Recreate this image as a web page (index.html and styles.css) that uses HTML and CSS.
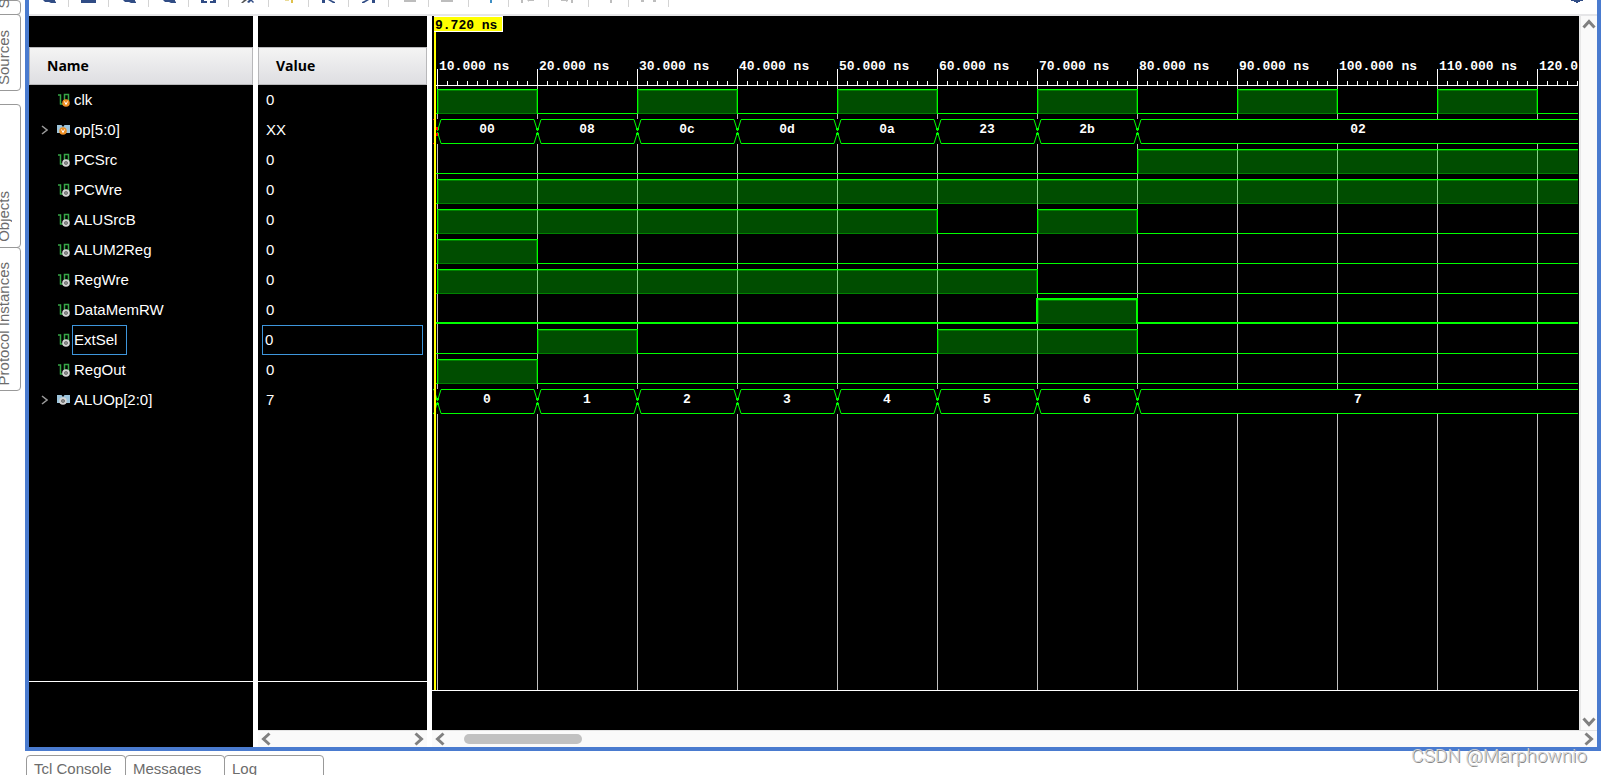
FILE: index.html
```html
<!DOCTYPE html>
<html lang="en">
<head>
<meta charset="utf-8">
<title>Waveform</title>
<link rel="stylesheet" href="styles.css">
</head>
<body>
<svg class="defs" aria-hidden="true">
  <defs>
    <symbol id="wire" viewBox="0 0 12 14">
      <path d="M0 2h2.500v9.500M6.500 11.500V1.500h4V8M2 11h5" fill="none" stroke="#35a545" stroke-width="1.500"/>
    </symbol>
    <symbol id="bus" viewBox="0 0 14 12">
      <path d="M1 1h4.500L7 3l1.500-2H14v8H1z" fill="#9cc4dc"/>
    </symbol>
    <symbol id="dot" viewBox="0 0 8 8">
      <circle cx="4" cy="4" r="3.800" fill="#d4d4d4"/><circle cx="4" cy="4" r="1.800" fill="#444"/><circle cx="4" cy="4" r=".8" fill="#ddd"/>
    </symbol>
    <symbol id="vdot" viewBox="0 0 8 8">
      <circle cx="4" cy="4" r="3.800" fill="#ee8f25"/><path d="M2.500 2.500 4 5.500 5.500 2.500" fill="none" stroke="#fff" stroke-width="1"/>
    </symbol>
    <symbol id="lens" viewBox="0 0 39 7"><path d="M14 0h12v1l1 1v1h-5l-2-1h-4z" fill="#304c85"/></symbol>
    <symbol id="chev" viewBox="0 0 14 14"><path d="M10.500 1.500 4.500 7l6 5.500" fill="none" stroke="#808080" stroke-width="3"/></symbol>
    <symbol id="cross" viewBox="0 0 8 24" overflow="visible">
      <path d="M0 .5h1L4.500 12 8 .5h1M0 24.500h1L4.500 13 8 24.500h1" fill="none" stroke="#0f0"/>
      <path d="M3 9h3v2H3zM3 14h3v2H3z" fill="#0f0"/>
    </symbol>
    <pattern id="minor" x="5" y="0" width="10" height="70" patternUnits="userSpaceOnUse"><path d="M0 65h1v4H0z" fill="#fff"/></pattern>
    <pattern id="major" x="5" y="0" width="100" height="70" patternUnits="userSpaceOnUse"><path d="M0 53h1v16H0zM50 64h1v5h-1z" fill="#fff"/></pattern>
  </defs>
</svg>

<div class="app">
  <nav class="rail" aria-label="Side panels">
    <button class="side-tab scope"><span>Scope</span></button>
    <button class="side-tab sources"><span>Sources</span></button>
    <button class="side-tab objects"><span>Objects</span></button>
    <button class="side-tab protocol"><span>Protocol Instances</span></button>
  </nav>

  <div class="workspace">
    <main class="frame">
      <div class="toolbar">
        <button class="tool" aria-label="Search"><svg viewBox="0 0 39 7"><use href="#lens"/></svg></button>
        <button class="tool" aria-label="Save"><svg viewBox="0 0 39 7"><path d="M12 0h15v3H12z" fill="#304c85"/></svg></button>
        <button class="tool" aria-label="Zoom in"><svg viewBox="0 0 39 7"><use href="#lens"/></svg></button>
        <button class="tool" aria-label="Zoom out"><svg viewBox="0 0 39 7"><use href="#lens"/></svg></button>
        <button class="tool" aria-label="Zoom fit"><svg viewBox="0 0 39 7"><path d="M12 0h3v1h3v2h-6zM27 0h-3v1h-3v2h6z" fill="#304c85"/></svg></button>
        <button class="tool" aria-label="Zoom to cursor"><svg viewBox="0 0 39 7"><path d="M15 0h3l-4 3h-2z" fill="#555"/><path d="M18 2l2-2h3l2 2-1 1-2-2-2 2z" fill="#304c85"/></svg></button>
        <button class="tool" aria-label="Go to marker"><svg viewBox="0 0 39 7"><path d="M16 0h4v1h-4z" fill="#eadb98"/><path d="M22 0h2v3h-2z" fill="#dfc14a"/></svg></button>
        <button class="tool" aria-label="Go to start"><svg viewBox="0 0 39 7"><path d="M13 0h3v3h-3zM19 0h3l4 2v1h-2z" fill="#304c85"/></svg></button>
        <button class="tool" aria-label="Go to end"><svg viewBox="0 0 39 7"><path d="M23 0h3v3h-3zM20 0h-3l-4 2v1h2z" fill="#304c85"/></svg></button>
        <button class="tool" aria-label="Previous transition"><svg viewBox="0 0 39 7"><path d="M15 0h12v2H15z" fill="#bdbdbd"/></svg></button>
        <button class="tool" aria-label="Next transition"><svg viewBox="0 0 39 7"><path d="M12 0h12v2H12z" fill="#bdbdbd"/></svg></button>
        <button class="tool" aria-label="Add marker"><svg viewBox="0 0 39 7"><path d="M21 0h2v3h-2z" fill="#3f8fc4"/></svg></button>
        <button class="tool" aria-label="Previous marker"><svg viewBox="0 0 39 7"><path d="M12 0h2v3h-2zM18 0h7v1h-5v1z" fill="#bdbdbd"/></svg></button>
        <button class="tool" aria-label="Next marker"><svg viewBox="0 0 39 7"><path d="M22 0h2v3h-2zM12 0h7v1l-2 1V1h-5z" fill="#bdbdbd"/></svg></button>
        <button class="tool" aria-label="Swap cursors"><svg viewBox="0 0 39 7"><path d="M21 0h2v3h-2z" fill="#bdbdbd"/></svg></button>
        <button class="tool" aria-label="Float ruler"><svg viewBox="0 0 39 7"><path d="M12 0h3v2h-3zM24 0h3v2h-3z" fill="#bdbdbd"/></svg></button>
        <button class="gear" aria-label="Settings"><svg viewBox="0 0 39 7"><path d="M14 0h12v1h-3v1h-2v1h-2V2h-2V1h-3z" fill="#304c85"/></svg></button>
      </div>

      <div class="panes">
        <section class="pane names">
          <table>
            <thead><tr><th>Name</th></tr></thead>
            <tbody>
              <tr><td><div class="sig"><svg class="icon"><use href="#wire" width="12" height="14"/><use href="#vdot" x="4" y="6" width="8" height="8"/></svg><span class="label">clk</span></div></td></tr>
              <tr><td><div class="sig"><button class="expand" aria-label="Expand op"><svg viewBox="0 0 7 10"><path d="M1 1l5 4-5 4" fill="none" stroke="#9a9a9a" stroke-width="1.500"/></svg></button><svg class="icon"><use href="#bus" x="-2" y="1" width="14" height="12"/><use href="#vdot" x="1" y="4" width="8" height="8"/></svg><span class="label">op[5:0]</span></div></td></tr>
              <tr><td><div class="sig"><svg class="icon"><use href="#wire" width="12" height="14"/><use href="#dot" x="4" y="6" width="8" height="8"/></svg><span class="label">PCSrc</span></div></td></tr>
              <tr><td><div class="sig"><svg class="icon"><use href="#wire" width="12" height="14"/><use href="#dot" x="4" y="6" width="8" height="8"/></svg><span class="label">PCWre</span></div></td></tr>
              <tr><td><div class="sig"><svg class="icon"><use href="#wire" width="12" height="14"/><use href="#dot" x="4" y="6" width="8" height="8"/></svg><span class="label">ALUSrcB</span></div></td></tr>
              <tr><td><div class="sig"><svg class="icon"><use href="#wire" width="12" height="14"/><use href="#dot" x="4" y="6" width="8" height="8"/></svg><span class="label">ALUM2Reg</span></div></td></tr>
              <tr><td><div class="sig"><svg class="icon"><use href="#wire" width="12" height="14"/><use href="#dot" x="4" y="6" width="8" height="8"/></svg><span class="label">RegWre</span></div></td></tr>
              <tr><td><div class="sig"><svg class="icon"><use href="#wire" width="12" height="14"/><use href="#dot" x="4" y="6" width="8" height="8"/></svg><span class="label">DataMemRW</span></div></td></tr>
              <tr><td><div class="sig"><svg class="icon"><use href="#wire" width="12" height="14"/><use href="#dot" x="4" y="6" width="8" height="8"/></svg><span class="label selected">ExtSel</span></div></td></tr>
              <tr><td><div class="sig"><svg class="icon"><use href="#wire" width="12" height="14"/><use href="#dot" x="4" y="6" width="8" height="8"/></svg><span class="label">RegOut</span></div></td></tr>
              <tr><td><div class="sig"><button class="expand" aria-label="Expand ALUOp"><svg viewBox="0 0 7 10"><path d="M1 1l5 4-5 4" fill="none" stroke="#9a9a9a" stroke-width="1.500"/></svg></button><svg class="icon"><use href="#bus" x="-2" y="1" width="14" height="12"/><use href="#dot" x="1" y="4" width="8" height="8"/></svg><span class="label">ALUOp[2:0]</span></div></td></tr>
            </tbody>
          </table>
          <div class="foot tall"></div>
        </section>

        <section class="pane values">
          <table>
            <thead><tr><th>Value</th></tr></thead>
            <tbody>
              <tr><td><div class="val">0</div></td></tr>
              <tr><td><div class="val">XX</div></td></tr>
              <tr><td><div class="val">0</div></td></tr>
              <tr><td><div class="val">0</div></td></tr>
              <tr><td><div class="val">0</div></td></tr>
              <tr><td><div class="val">0</div></td></tr>
              <tr><td><div class="val">0</div></td></tr>
              <tr><td><div class="val">0</div></td></tr>
              <tr><td><div class="val selected">0</div></td></tr>
              <tr><td><div class="val">0</div></td></tr>
              <tr><td><div class="val">7</div></td></tr>
            </tbody>
          </table>
          <div class="foot"></div>
          <div class="hscroll">
            <button aria-label="Scroll left"><svg viewBox="0 0 14 14"><use href="#chev"/></svg></button>
            <button class="flip" aria-label="Scroll right"><svg viewBox="0 0 14 14"><use href="#chev"/></svg></button>
          </div>
        </section>

        <section class="wave">
          <div class="wave-body">
            <div class="canvas">
              <div class="plot">
                <svg class="ruler">
                  <rect x="4" width="100%" height="70" fill="url(#minor)"/>
                  <rect x="4" width="100%" height="70" fill="url(#major)"/>
                  <rect x="4" y="69" width="100%" height="1" fill="#fff"/>
                  <g class="mono">
                    <text x="7" y="54">10.000 ns</text><text x="107" y="54">20.000 ns</text><text x="207" y="54">30.000 ns</text>
                    <text x="307" y="54">40.000 ns</text><text x="407" y="54">50.000 ns</text><text x="507" y="54">60.000 ns</text>
                    <text x="607" y="54">70.000 ns</text><text x="707" y="54">80.000 ns</text><text x="807" y="54">90.000 ns</text>
                    <text x="907" y="54">100.000 ns</text><text x="1007" y="54">110.000 ns</text><text x="1107" y="54">120.000 ns</text>
                  </g>
                </svg>
                <div class="traces">
                  <svg class="trace">
                    <path class="fill" d="M5 3h100v25H5zM205 3h100v25H205zM405 3h100v25H405zM605 3h100v25H605zM805 3h100v25H805zM1005 3h100v25H1005z"/>
                    <path class="dim" d="M6.500 4.500h98v23h-98zM206.500 4.500h98v23h-98zM406.500 4.500h98v23h-98zM606.500 4.500h98v23h-98zM806.500 4.500h98v23h-98zM1006.500 4.500h98v23h-98z"/>
                    <path class="line" d="M4 27.500h1.500v-24h100v24h100v-24h100v24h100v-24h100v24h100v-24h100v24h100v-24h100v24h100v-24h100v24H4000"/>
                  </svg>
                  <svg class="trace mono">
                    <path class="mask" d="M4 3h4000v25H4z"/>
                    <path class="line" d="M9 3.500h92M109 3.500h92M209 3.500h92M309 3.500h92M409 3.500h92M509 3.500h92M609 3.500h92M709 3.500H4000M9 27.500h92M109 27.500h92M209 27.500h92M309 27.500h92M409 27.500h92M509 27.500h92M609 27.500h92M709 27.500H4000"/>
                    <use href="#cross" x="1" y="3" width="8" height="24"/><use href="#cross" x="101" y="3" width="8" height="24"/><use href="#cross" x="201" y="3" width="8" height="24"/><use href="#cross" x="301" y="3" width="8" height="24"/><use href="#cross" x="401" y="3" width="8" height="24"/><use href="#cross" x="501" y="3" width="8" height="24"/><use href="#cross" x="601" y="3" width="8" height="24"/><use href="#cross" x="701" y="3" width="8" height="24"/>
                    <path d="M0 3h5v25H0z" fill="#000"/><path d="M1 3h1v1H1zM1 27h1v1H1zM4 11h2v3H4zM4 17h2v3H4z" fill="#f00"/>
                    <g class="mid"><text x="55" y="17">00</text><text x="155" y="17">08</text><text x="255" y="17">0c</text><text x="355" y="17">0d</text><text x="455" y="17">0a</text><text x="555" y="17">23</text><text x="655" y="17">2b</text><text x="926" y="17">02</text></g>
                  </svg>
                  <svg class="trace">
                    <path class="fill" d="M705 3h3300v25H705z"/><path class="dim" d="M706.500 4.500H4000v23H706.500z"/>
                    <path class="line" d="M4 27.500h701.500v-24H4000"/>
                  </svg>
                  <svg class="trace">
                    <path class="fill" d="M5 3h4000v25H5z"/><path class="dim" d="M6.500 4.500H4000v23H6.500z"/>
                    <path class="line" d="M4 27.500h1.500v-24H4000"/>
                  </svg>
                  <svg class="trace">
                    <path class="fill" d="M5 3h500v25H5zM605 3h100v25H605z"/><path class="dim" d="M6.500 4.500h498v23h-498zM606.500 4.500h98v23h-98z"/>
                    <path class="line" d="M4 27.500h1.500v-24h500v24h100v-24h100v24H4000"/>
                  </svg>
                  <svg class="trace">
                    <path class="fill" d="M5 3h100v25H5z"/><path class="dim" d="M6.500 4.500h98v23h-98z"/>
                    <path class="line" d="M4 27.500h1.500v-24h100v24H4000"/>
                  </svg>
                  <svg class="trace">
                    <path class="fill" d="M5 3h600v25H5z"/><path class="dim" d="M6.500 4.500h598v23h-598z"/>
                    <path class="line" d="M4 27.500h1.500v-24h600v24H4000"/>
                  </svg>
                  <svg class="trace">
                    <path class="fill" d="M605 3h100v25H605z"/><path class="dim" d="M606.500 4.500h98v23h-98z"/>
                    <path class="line thick" d="M4 27h601V3h100v24H4000"/>
                  </svg>
                  <svg class="trace">
                    <path class="fill" d="M105 3h100v25H105zM505 3h200v25H505z"/><path class="dim" d="M106.500 4.500h98v23h-98zM506.500 4.500h198v23h-198z"/>
                    <path class="line" d="M4 27.500h101.500v-24h100v24h300v-24h200v24H4000"/>
                  </svg>
                  <svg class="trace">
                    <path class="fill" d="M5 3h100v25H5z"/><path class="dim" d="M6.500 4.500h98v23h-98z"/>
                    <path class="line" d="M4 27.500h1.500v-24h100v24H4000"/>
                  </svg>
                  <svg class="trace mono">
                    <path class="mask" d="M4 3h4000v25H4z"/>
                    <path class="line" d="M9 3.500h92M109 3.500h92M209 3.500h92M309 3.500h92M409 3.500h92M509 3.500h92M609 3.500h92M709 3.500H4000M9 27.500h92M109 27.500h92M209 27.500h92M309 27.500h92M409 27.500h92M509 27.500h92M609 27.500h92M709 27.500H4000"/>
                    <use href="#cross" x="1" y="3" width="8" height="24"/><use href="#cross" x="101" y="3" width="8" height="24"/><use href="#cross" x="201" y="3" width="8" height="24"/><use href="#cross" x="301" y="3" width="8" height="24"/><use href="#cross" x="401" y="3" width="8" height="24"/><use href="#cross" x="501" y="3" width="8" height="24"/><use href="#cross" x="601" y="3" width="8" height="24"/><use href="#cross" x="701" y="3" width="8" height="24"/>
                    <g class="mid"><text x="55" y="17">0</text><text x="155" y="17">1</text><text x="255" y="17">2</text><text x="355" y="17">3</text><text x="455" y="17">4</text><text x="555" y="17">5</text><text x="655" y="17">6</text><text x="926" y="17">7</text></g>
                  </svg>
                </div>
                <div class="cursor"><span class="cursor-tag">9.720 ns</span></div>
              </div>
            </div>
            <div class="vscroll">
              <button class="up" aria-label="Scroll up"><svg viewBox="0 0 14 14"><use href="#chev"/></svg></button>
              <button class="down" aria-label="Scroll down"><svg viewBox="0 0 14 14"><use href="#chev"/></svg></button>
            </div>
          </div>
          <div class="hscroll">
            <button aria-label="Scroll left"><svg viewBox="0 0 14 14"><use href="#chev"/></svg></button>
            <div class="track"><div class="thumb"></div></div>
            <button class="flip" aria-label="Scroll right"><svg viewBox="0 0 14 14"><use href="#chev"/></svg></button>
          </div>
        </section>
      </div>
    </main>

    <nav class="bottom-tabs" aria-label="Output panels">
      <button>Tcl Console</button><button>Messages</button><button>Log</button>
    </nav>
  </div>
  <div class="watermark">CSDN @Marphownio</div>
</div>
</body>
</html>
```

FILE: styles.css
```css
* { box-sizing: border-box; }

body {
  margin: 0;
  background: #fff;
  font-family: "Liberation Sans", Arial, sans-serif;
  font-size: 15px;
  line-height: 18px;
}

button {
  margin: 0;
  padding: 0;
  border: 0;
  background: none;
  font: inherit;
  color: inherit;
}

svg { display: block; }

.defs { position: absolute; width: 0; height: 0; }

.app {
  position: relative;
  display: flex;
  height: 100vh;
  overflow: hidden;
}

/* left rail */
.rail {
  display: flex;
  flex-direction: column;
  width: 25px;
  flex: none;
  overflow: hidden;
  color: #6c6c6c;
}

.side-tab {
  display: flex;
  flex: none;
  align-items: flex-end;
  width: 27px;
  margin-left: -6px;
  padding-bottom: 5px;
  border: 1px solid #999;
  border-radius: 0 4px 4px 0;
}

.side-tab span {
  writing-mode: vertical-rl;
  transform: rotate(180deg);
  white-space: nowrap;
}

.side-tab + .side-tab { margin-top: -1px; }
.scope { height: 15px; }
.sources { height: 77px; }
.side-tab.objects { height: 144px; margin-top: 13px; }
.protocol { height: 144px; }

/* main frame */
.workspace {
  display: flex;
  flex-direction: column;
  flex: 1;
  min-width: 0;
}

.frame {
  display: flex;
  flex-direction: column;
  flex: 1;
  min-height: 0;
  margin-right: 1px;
  border: 4px solid #4a7bcf;
  border-top: 0;
}

.toolbar {
  display: flex;
  flex: none;
  height: 16px;
  border-bottom: 2px solid #e6e6e8;
}

.tool, .gear { width: 40px; height: 7px; }
.tool { border-right: 1px solid #d4d4d4; }
.gear { margin-left: auto; }
.tool svg, .gear svg { width: 39px; height: 7px; }

.panes {
  display: flex;
  flex: 1;
  gap: 5px;
  min-height: 0;
}

.pane {
  display: flex;
  flex-direction: column;
  flex: none;
  padding-top: 31px;
  background: #000;
  color: #fff;
}

.names { width: 224px; }
.values { width: 169px; }

table { width: 100%; border-collapse: separate; border-spacing: 0; }

th {
  height: 38px;
  padding: 0 17px;
  border: 1px solid #b8b8ba;
  background: linear-gradient(#f4f4f4, #dedee2);
  color: #000;
  font-family: "Open Sans", sans-serif;
  font-size: 14px;
  font-weight: 700;
  text-align: left;
}

td { padding: 0; }

.sig {
  display: flex;
  align-items: center;
  justify-content: flex-start;
  height: 30px;
  padding-left: 29px;
}

.expand { width: 17px; margin-left: -17px; }
.expand svg { width: 7px; height: 10px; }
.icon { width: 12px; height: 14px; overflow: visible; }

.label {
  margin-left: 2px;
  padding: 5px 9px 5px 1px;
  border: 1px solid transparent;
}

.val {
  height: 30px;
  margin: 0 4px;
  padding: 5px 3px;
  border: 1px solid transparent;
}

.label.selected, .val.selected { border-color: #3e96dc; }
.val.selected { padding-left: 2px; }

.foot {
  height: 49px;
  margin-top: auto;
  border-top: 1px solid #fff;
}

.foot.tall { height: 66px; }

/* waveform */
.wave {
  display: flex;
  flex-direction: column;
  flex: 1;
  min-width: 0;
}

.wave-body { display: flex; flex: 1; min-height: 0; }

.canvas {
  display: flex;
  flex-direction: column;
  flex: 1;
  min-width: 0;
  padding: 0 1px 39px 0;
  background: #000;
}

.plot {
  position: relative;
  display: flex;
  flex-direction: column;
  flex: 1;
  overflow: hidden;
  border-bottom: 1px solid #fff;
}

.ruler { width: 100%; height: 70px; flex: none; }

.traces {
  flex: 1;
  background: linear-gradient(to right, #c0c0c0 1px, transparent 1px) 5px 0 / 100px 100%;
}

.trace { width: 100%; height: 30px; }

.fill { fill: #0f0; fill-opacity: .3; shape-rendering: crispEdges; }
.dim { fill: none; stroke: #0f0; stroke-opacity: .3; shape-rendering: crispEdges; }
.line { fill: none; stroke: #0f0; shape-rendering: crispEdges; }
.thick { stroke-width: 2; }
.mask { fill: #000; }

.mono, .cursor-tag {
  font-family: "Liberation Mono", "Courier New", monospace;
  font-size: 13px;
  font-weight: 700;
}

.mono text { fill: #fff; }
.mid { text-anchor: middle; }

.cursor {
  position: absolute;
  top: 0;
  bottom: 0;
  left: 2px;
  width: 2px;
  background: #ff0;
}

.cursor-tag {
  display: block;
  width: 69px;
  height: 16px;
  border: 1px solid #fff;
  border-left: 0;
  background: #ff0;
  color: #000;
  line-height: 18px;
  padding-left: 1px;
  white-space: nowrap;
}

/* scroll bars */
.vscroll {
  display: flex;
  flex-direction: column;
  align-items: center;
  justify-content: space-between;
  width: 18px;
  padding: 1px 0;
  border-left: 2px solid #e8e8e8;
  background: #fafafa;
}

.hscroll {
  display: flex;
  flex: none;
  align-items: center;
  justify-content: space-between;
  height: 17px;
  padding: 0 1px;
  border-top: 1px solid #e4e4e4;
  background: #fafafa;
}

.hscroll svg, .vscroll svg { width: 14px; height: 14px; }
.flip { transform: rotate(180deg); }
.up { transform: rotate(90deg); }
.down { transform: rotate(-90deg); }

.track { flex: 1; padding: 0 17px; }

.thumb {
  width: 11%;
  max-width: 118px;
  height: 10px;
  border-radius: 5px;
  background: #c1c1c1;
}

/* output tabs */
.bottom-tabs {
  display: flex;
  flex: none;
  height: 24px;
  padding: 4px 0 0 1px;
  overflow: hidden;
  color: #6c6c6c;
}

.bottom-tabs button {
  width: 100px;
  height: 28px;
  margin-right: -1px;
  padding: 4px 7px;
  border: 1px solid #999;
  border-radius: 4px 4px 0 0;
  text-align: left;
}

.watermark {
  position: absolute;
  right: 15px;
  bottom: 8px;
  color: #d4d4d4;
  font-family: Roboto, sans-serif;
  font-size: 19px;
  font-weight: 300;
  line-height: 22px;
  text-shadow: 1px 1px 0 #888;
}
```
